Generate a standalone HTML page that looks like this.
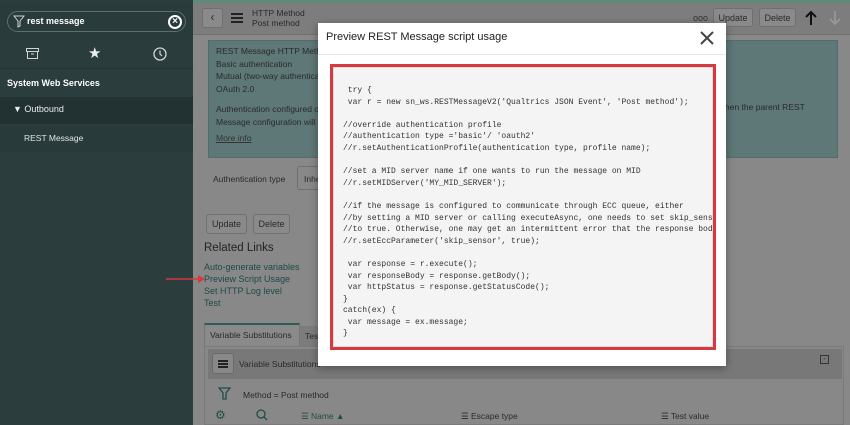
<!DOCTYPE html>
<html><head><meta charset="utf-8"><style>
*{margin:0;padding:0;box-sizing:border-box}
body{width:850px;height:425px;overflow:hidden;position:relative;background:#888;font-family:"Liberation Sans",sans-serif;font-size:9px;color:#2a2a2a}
.abs{position:absolute}
.side{left:0;top:0;width:193px;height:425px;background:#2b3d3d}
.btn{position:absolute;border:1px solid #6f6f6f;border-radius:3px;background:#8a8a8a;color:#2a2a2a;font-size:9px;text-align:center;line-height:18px}
.lnk{color:#1c4a45;font-size:9px;position:absolute;left:204px}
pre{font-family:"Liberation Mono",monospace;font-size:8px;line-height:11.6px;color:#333}
</style></head><body>
<div class="abs" style="left:0;top:0;width:850px;height:3px;background:#5f8a78"></div>
<div class="abs side"></div>
<div class="abs" style="left:0;top:3px;width:193px;height:37px;background:#293b3b"></div>
<div class="abs" style="left:7px;top:11px;width:179px;height:21px;border:1px solid #5d6f6e;border-radius:11px"></div>
<svg class="abs" style="left:13px;top:15px" width="12" height="13"><path d="M1 1h10L7 6v5L5 12V6z" fill="none" stroke="#cfd6d5" stroke-width="1"/></svg>
<div class="abs" style="left:27px;top:16px;color:#fff;font-size:9px;font-weight:bold">rest message</div>
<div class="abs" style="left:168px;top:15px;width:14px;height:14px;border-radius:50%;border:2px solid #fff;color:#fff;font-size:10px;line-height:10px;text-align:center;font-weight:bold">×</div>
<div class="abs" style="left:0;top:40px;width:193px;height:29px;background:#2a3c3c;border-bottom:1px solid #223131"></div>
<svg class="abs" style="left:26px;top:48px" width="13" height="11"><rect x="0.5" y="0.5" width="12" height="3" fill="none" stroke="#cfd6d5"/><rect x="1.5" y="3.5" width="10" height="7" fill="none" stroke="#cfd6d5"/><line x1="5" y1="6" x2="8" y2="6" stroke="#cfd6d5"/></svg>
<div class="abs" style="left:88px;top:44px;color:#e8eded;font-size:15px">★</div>
<svg class="abs" style="left:153px;top:47px" width="14" height="14"><circle cx="7" cy="7" r="6" fill="none" stroke="#cfd6d5" stroke-width="1.3"/><path d="M7 3.5V7l2 2" fill="none" stroke="#cfd6d5" stroke-width="1.2"/></svg>
<div class="abs" style="left:7px;top:78px;color:#fff;font-weight:bold;font-size:9px">System Web Services</div>
<div class="abs" style="left:0;top:97px;width:193px;height:27px;background:#223232"></div>
<div class="abs" style="left:13px;top:104px;color:#e8eded;font-size:9px">▼ Outbound</div>
<div class="abs" style="left:0;top:125px;width:193px;height:27px;background:#283a3a"></div>
<div class="abs" style="left:24px;top:133px;color:#e0e6e6;font-size:8.5px">REST Message</div>
<div class="abs" style="left:193px;top:3px;width:657px;height:32px;background:#7d7d7d;border-bottom:1px solid #707070"></div>
<div class="btn" style="left:202px;top:8px;width:21px;height:20px;font-size:12px;line-height:17px">‹</div>
<div class="abs" style="left:231px;top:13px;width:12px;height:2px;background:#222;box-shadow:0 4px 0 #222,0 8px 0 #222"></div>
<div class="abs" style="left:252px;top:8px;font-size:8.5px;line-height:10px;color:#2a2a2a">HTTP Method<br>Post method</div>
<div class="btn" style="left:713px;top:8px;width:40px;height:19px">Update</div>
<div class="btn" style="left:759px;top:8px;width:37px;height:19px">Delete</div>
<svg class="abs" style="left:804px;top:10px" width="14" height="16"><path d="M7 15V2M2 7l5-5 5 5" fill="none" stroke="#111" stroke-width="2"/></svg>
<svg class="abs" style="left:828px;top:10px" width="14" height="16"><path d="M7 1v13M2 9l5 5 5-5" fill="none" stroke="#999" stroke-width="1.6"/></svg>
<div class="abs" style="left:693px;top:13px;font-size:9px;color:#333">ooo</div>
<div class="abs" style="left:208px;top:40px;width:630px;height:118px;background:#5e7777;border:1px solid #556b6b"></div>
<div class="abs" style="left:216px;top:45px;font-size:8.5px;line-height:12.5px;color:#2a2a2a">REST Message HTTP Method<br>Basic authentication<br>Mutual (two-way authentication)<br>OAuth 2.0</div>
<div class="abs" style="left:216px;top:103px;font-size:8.5px;line-height:12.5px;color:#2a2a2a">Authentication configured on<br>Message configuration will be</div>
<div class="abs" style="left:216px;top:133px;font-size:8.5px;text-decoration:underline;color:#333">More info</div>
<div class="abs" style="left:725px;top:102px;font-size:8.5px;color:#2a2a2a">hen the parent REST</div>
<div class="abs" style="left:213px;top:174px;font-size:8.5px">Authentication type</div>
<div class="abs" style="left:297px;top:166px;width:40px;height:24px;border:1px solid #6f6f6f;border-radius:3px;font-size:8.5px;padding:7px 0 0 6px">Inhe</div>
<div class="btn" style="left:206px;top:214px;width:41px;height:20px">Update</div>
<div class="btn" style="left:253px;top:214px;width:37px;height:20px">Delete</div>
<div class="abs" style="left:204px;top:242px;font-size:11.5px;color:#222">Related Links</div>
<div class="lnk" style="top:262px">Auto-generate variables</div>
<div class="lnk" style="top:274px">Preview Script Usage</div>
<div class="lnk" style="top:286px">Set HTTP Log level</div>
<div class="lnk" style="top:298px">Test</div>
<svg class="abs" style="left:166px;top:274px" width="40" height="10"><line x1="0" y1="5" x2="34" y2="5" stroke="#d6393f" stroke-width="1.5"/><path d="M32 1l7 4-7 4z" fill="#d6393f"/></svg>
<div class="abs" style="left:204px;top:323px;width:96px;height:23px;border-top:2px solid #2f5c57;background:#8a8a8a;border-left:1px solid #777;border-right:1px solid #777"></div>
<div class="abs" style="left:210px;top:330px;font-size:8.5px">Variable Substitutions</div>
<div class="abs" style="left:300px;top:326px;width:30px;height:20px;background:#7c7c7c;font-size:8.5px;padding:5px 0 0 5px">Test</div>
<div class="abs" style="left:204px;top:346px;width:640px;height:79px;border:1px solid #7a7a7a"></div>
<div class="abs" style="left:208px;top:349px;width:634px;height:30px;background:#787878"></div>
<div class="abs" style="left:212px;top:353px;width:22px;height:21px;border:1px solid #6a6a6a;border-radius:3px;background:#888"></div>
<div class="abs" style="left:218px;top:360px;width:10px;height:1.5px;background:#222;box-shadow:0 3px 0 #222,0 6px 0 #222"></div>
<div class="abs" style="left:239px;top:359px;font-size:8.5px">Variable Substitutions</div>
<div class="abs" style="left:820px;top:355px;width:9px;height:9px;border:1px solid #333;font-size:8px;line-height:6px;text-align:center">-</div>
<svg class="abs" style="left:218px;top:387px" width="13" height="14"><path d="M1 1h11L8 6v6H5V6z" fill="none" stroke="#1f4d49" stroke-width="1.3"/></svg>
<div class="abs" style="left:243px;top:390px;font-size:8.5px">Method = Post method</div>
<div class="abs" style="left:215px;top:408px;color:#1f4d49;font-size:12px">⚙</div>
<svg class="abs" style="left:256px;top:409px" width="12" height="12"><circle cx="5" cy="5" r="4" fill="none" stroke="#1f4d49" stroke-width="1.3"/><line x1="8" y1="8" x2="11" y2="11" stroke="#1f4d49" stroke-width="1.3"/></svg>
<div class="abs" style="left:301px;top:411px;font-size:8.5px;color:#1f4d49">☰ Name ▲</div>
<div class="abs" style="left:461px;top:411px;font-size:8.5px">☰ Escape type</div>
<div class="abs" style="left:661px;top:411px;font-size:8.5px">☰ Test value</div>
<div class="abs" style="left:318px;top:23px;width:408px;height:343px;background:#fff;box-shadow:0 2px 8px rgba(0,0,0,.35)"></div>
<div class="abs" style="left:326px;top:31px;font-size:11px;color:#222">Preview REST Message script usage</div>
<svg class="abs" style="left:700px;top:31px" width="14" height="14"><path d="M1 1L13 13M13 1L1 13" stroke="#444" stroke-width="2"/></svg>
<div class="abs" style="left:318px;top:54px;width:408px;height:1px;background:#e6e6e6"></div>
<div class="abs" style="left:330px;top:64px;width:386px;height:286px;border:3px solid #d6393f;background:#f3f3f3"></div>
<div class="abs" style="left:333px;top:67px;width:380px;height:280px;border:1px solid #ddd;overflow:hidden;background:#f4f4f4">
<pre style="position:absolute;left:9px;top:17px">
 try {
 var r = new sn_ws.RESTMessageV2('Qualtrics JSON Event', 'Post method');

//override authentication profile
//authentication type ='basic'/ 'oauth2'
//r.setAuthenticationProfile(authentication type, profile name);

//set a MID server name if one wants to run the message on MID
//r.setMIDServer('MY_MID_SERVER');

//if the message is configured to communicate through ECC queue, either
//by setting a MID server or calling executeAsync, one needs to set skip_sensor
//to true. Otherwise, one may get an intermittent error that the response body
//r.setEccParameter('skip_sensor', true);

 var response = r.execute();
 var responseBody = response.getBody();
 var httpStatus = response.getStatusCode();
}
catch(ex) {
 var message = ex.message;
}</pre>
</div>
</body></html>
